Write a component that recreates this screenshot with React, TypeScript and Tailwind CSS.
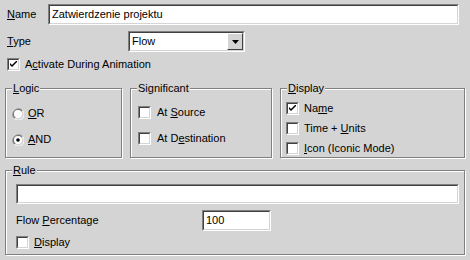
import React from 'react';

const sunken =
  'border border-t-[#808080] border-l-[#808080] border-b-white border-r-white';
const sunkenInner =
  'border border-t-[#404040] border-l-[#404040] border-b-[#d4d4d4] border-r-[#d4d4d4]';

function U({ children }: { children: React.ReactNode }) {
  return <span className="underline underline-offset-[1px]">{children}</span>;
}

function Field({ className = '', children }: { className?: string; children?: React.ReactNode }) {
  return (
    <div className={`${sunken} ${className}`}>
      <div className={`${sunkenInner} bg-white h-full flex items-center pl-[1px] overflow-hidden`}>
        {children}
      </div>
    </div>
  );
}

function Check({ checked = false }: { checked?: boolean }) {
  return (
    <div className={`${sunken} w-[13px] h-[13px] shrink-0`}>
      <div className={`${sunkenInner} bg-white w-full h-full flex items-center justify-center`}>
        {checked && (
          <svg width="7" height="7" viewBox="0 0 7 7">
            <path d="M0 2 L0 4 L2 6 L7 1 L7 -1 L2 4 Z" fill="#000" />
          </svg>
        )}
      </div>
    </div>
  );
}

function Radio({ checked = false }: { checked?: boolean }) {
  return (
    <svg width="12" height="12" viewBox="0 0 12 12" className="shrink-0">
      <path d="M10.5 2.5 A5.5 5.5 0 1 0 2.5 10.5" fill="none" stroke="#808080" />
      <path d="M9.8 3.2 A4.5 4.5 0 1 0 3.2 9.8" fill="none" stroke="#404040" />
      <path d="M2.5 10.5 A5.5 5.5 0 0 0 10.5 2.5" fill="none" stroke="#fff" />
      <circle cx="6" cy="6" r="4" fill="#fff" />
      {checked && <circle cx="6" cy="6" r="1.8" fill="#000" />}
    </svg>
  );
}

function Group({
  title,
  className = '',
  children,
}: {
  title: React.ReactNode;
  className?: string;
  children?: React.ReactNode;
}) {
  return (
    <div
      className={`relative border border-[#808080] shadow-[inset_1px_1px_0_#fff,1px_1px_0_#fff] ${className}`}
    >
      <span className="absolute left-[6px] top-[-8px] bg-[#d4d4d4] px-[1px] leading-[14px]">
        {title}
      </span>
      {children}
    </div>
  );
}

export default function App() {
  return (
    <div
      className="w-[470px] h-[260px] bg-[#d4d4d4] text-black text-[11px] leading-[13px] overflow-hidden"
      style={{ fontFamily: '"Liberation Sans", Arial, sans-serif' }}
    >
      {/* Name */}
      <div className="flex items-center pt-[4px]">
        <span className="w-[48px] pl-[7px]">
          <U>N</U>ame
        </span>
        <Field className="w-[411px] h-[21px]">
          <span className="pl-[1px]">Zatwierdzenie projektu</span>
        </Field>
      </div>

      {/* Type */}
      <div className="flex items-center mt-[6px]">
        <span className="w-[128px] pl-[7px]">
          <U>T</U>ype
        </span>
        <div className={`${sunken} w-[117px] h-[21px]`}>
          <div className={`${sunkenInner} bg-white h-full flex items-center`}>
            <span className="flex-1 pl-[2px]">Flow</span>
            <div className="w-[16px] h-[17px] bg-[#d4d4d4] border border-t-white border-l-white border-b-[#404040] border-r-[#404040] flex items-center justify-center">
              <svg width="7" height="4" viewBox="0 0 7 4">
                <path d="M0 0 H7 L3.5 4 Z" fill="#000" />
              </svg>
            </div>
          </div>
        </div>
      </div>

      {/* Activate */}
      <div className="flex items-center gap-[5px] pl-[7px] mt-[6px]">
        <Check checked />
        <span>
          A<U>c</U>tivate During Animation
        </span>
      </div>

      {/* Groups */}
      <div className="flex gap-[8px] pl-[5px] mt-[17px]">
        <Group title={<><U>L</U>ogic</>} className="w-[117px] h-[70px]">
          <div className="flex flex-col gap-[13px] pl-[6px] pt-[18px]">
            <div className="flex items-center gap-[4px]">
              <Radio />
              <span>
                <U>O</U>R
              </span>
            </div>
            <div className="flex items-center gap-[4px]">
              <Radio checked />
              <span>
                <U>A</U>ND
              </span>
            </div>
          </div>
        </Group>

        <Group title="Significant" className="w-[142px] h-[70px]">
          <div className="flex flex-col gap-[13px] pl-[7px] pt-[17px]">
            <div className="flex items-center gap-[6px]">
              <Check />
              <span>
                At <U>S</U>ource
              </span>
            </div>
            <div className="flex items-center gap-[6px]">
              <Check />
              <span>
                At D<U>e</U>stination
              </span>
            </div>
          </div>
        </Group>

        <Group title={<><U>D</U>isplay</>} className="w-[185px] h-[70px]">
          <div className="flex flex-col gap-[7px] pl-[5px] pt-[13px]">
            <div className="flex items-center gap-[5px]">
              <Check checked />
              <span>
                Na<U>m</U>e
              </span>
            </div>
            <div className="flex items-center gap-[5px]">
              <Check />
              <span>
                Time + <U>U</U>nits
              </span>
            </div>
            <div className="flex items-center gap-[5px]">
              <Check />
              <span>
                <U>I</U>con (Iconic Mode)
              </span>
            </div>
          </div>
        </Group>
      </div>

      {/* Rule */}
      <div className="pl-[5px] mt-[12px]">
        <Group title={<><U>R</U>ule</>} className="w-[460px] h-[85px]">
          <div className="pl-[10px] pt-[13px]">
            <Field className="w-[443px] h-[20px]" />
            <div className="flex items-center mt-[6px]">
              <span className="w-[186px]">
                Flow <U>P</U>ercentage
              </span>
              <Field className="w-[69px] h-[21px]">
                <span className="pl-[1px]">100</span>
              </Field>
            </div>
            <div className="flex items-center gap-[5px] mt-[5px]">
              <Check />
              <span>
                <U>D</U>isplay
              </span>
            </div>
          </div>
        </Group>
      </div>
    </div>
  );
}
